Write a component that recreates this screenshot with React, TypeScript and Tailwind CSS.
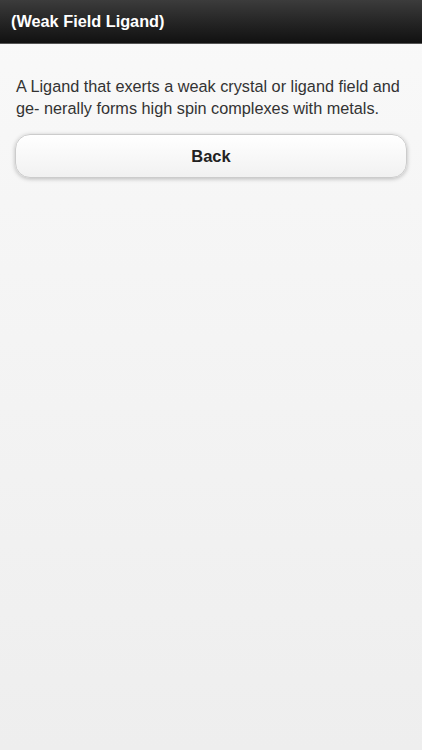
export default function App() {
  return (
    <div
      className="min-h-[750px] w-full flex flex-col bg-gradient-to-b from-[#f9f9f9] to-[#eeeeee]"
      style={{ fontFamily: '"Liberation Sans", Arial, sans-serif' }}
    >
      <div className="h-[44px] flex items-center px-[11px] bg-gradient-to-b from-[#3c3c3c] to-[#111111] border-b border-[#555555]">
        <h1 className="text-white font-bold text-[16.3px] leading-none pb-[1px]">(Weak Field Ligand)</h1>
      </div>
      <div className="px-[15px] pt-[31px]">
        <p className="text-[#333333] text-[16.25px] leading-[22px] pl-[1px]">
          A Ligand that exerts a weak crystal or ligand field and ge- nerally forms high spin complexes with metals.
        </p>
        <button className="mt-[15px] w-full h-[44px] rounded-[15px] border border-[#cccccc] bg-gradient-to-b from-[#ffffff] to-[#f1f1f1] shadow-[0_1px_4px_rgba(0,0,0,0.25)] text-[#222222] font-bold text-[16.5px]">
          Back
        </button>
      </div>
    </div>
  );
}
